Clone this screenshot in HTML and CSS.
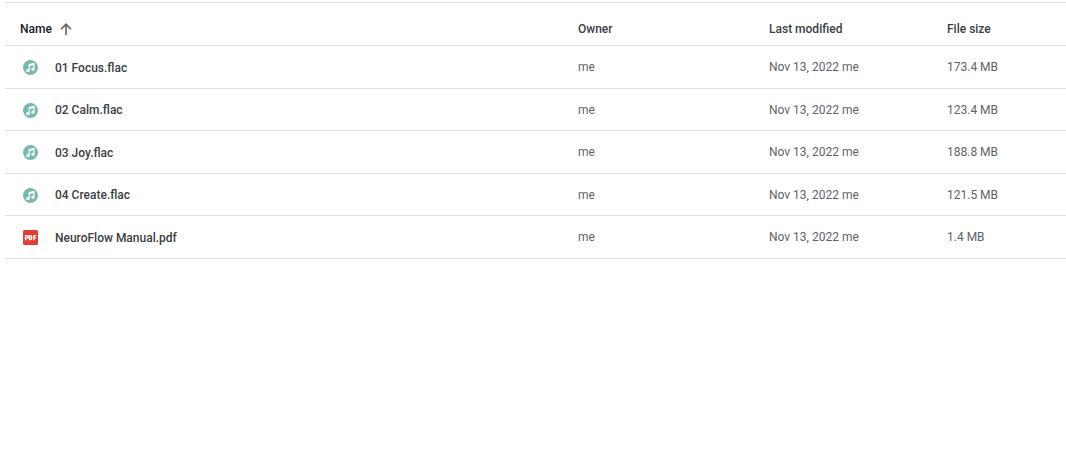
FILE: index.html
```
<!DOCTYPE html>
<html lang="en">
<head>
  <meta charset="UTF-8">
  <meta name="viewport" content="width=device-width, initial-scale=1.0">
  <title>Files</title>
  <link rel="stylesheet" href="styles.css">
</head>
<body>

  <!-- shared icons -->
  <svg class="icon-defs" aria-hidden="true">
    <symbol id="icon-audio" viewBox="0 0 16 16">
      <circle cx="8" cy="8" r="8" fill="#74bbad"/>
      <path d="M6 4.2 L12.4 3 V9.8 A1.8 1.6 0 1 1 11.2 8.4 V5.6 L7.2 6.4 V11.2 A1.9 1.7 0 1 1 6 9.7 Z" fill="#fff"/>
    </symbol>
    <symbol id="icon-pdf" viewBox="0 0 16 16">
      <rect width="16" height="16" rx="1.6" fill="#e53c31"/>
      <path d="M2.7 10.8 V6 H4.2 A1.2 1.2 0 0 1 4.2 8.7 H2.7 M7 6 V10.1 H7.8 A1.4 1.4 0 0 0 9.2 8.7 V7.4 A1.4 1.4 0 0 0 7.8 6 Z M11.6 10.8 V6 H14.2 M11.6 8.4 H13.8" fill="none" stroke="#fff" stroke-width="1.5"/>
    </symbol>
  </svg>

  <main class="files">
    <table class="file-list">
      <thead>
        <tr>
          <th class="col-name" scope="col" aria-sort="ascending">
            <button class="sort" type="button">
              Name
              <svg class="sort-arrow" viewBox="0 0 12 12" aria-hidden="true">
                <path d="M6 12 V1.5 M1 6.2 L6 1.2 L11 6.2" fill="none" stroke="#5f6368" stroke-width="1.6"/>
              </svg>
            </button>
          </th>
          <th class="col-owner" scope="col">Owner</th>
          <th class="col-modified" scope="col">Last modified</th>
          <th class="col-size" scope="col">File size</th>
        </tr>
      </thead>
      <tbody>
        <tr>
          <td><div class="file"><svg class="file-icon" aria-hidden="true"><use href="#icon-audio"/></svg>01 Focus.flac</div></td>
          <td>me</td>
          <td>Nov 13, 2022 <span class="editor">me</span></td>
          <td>173.4 MB</td>
        </tr>
        <tr>
          <td><div class="file"><svg class="file-icon" aria-hidden="true"><use href="#icon-audio"/></svg>02 Calm.flac</div></td>
          <td>me</td>
          <td>Nov 13, 2022 <span class="editor">me</span></td>
          <td>123.4 MB</td>
        </tr>
        <tr>
          <td><div class="file"><svg class="file-icon" aria-hidden="true"><use href="#icon-audio"/></svg>03 Joy.flac</div></td>
          <td>me</td>
          <td>Nov 13, 2022 <span class="editor">me</span></td>
          <td>188.8 MB</td>
        </tr>
        <tr>
          <td><div class="file"><svg class="file-icon" aria-hidden="true"><use href="#icon-audio"/></svg>04 Create.flac</div></td>
          <td>me</td>
          <td>Nov 13, 2022 <span class="editor">me</span></td>
          <td>121.5 MB</td>
        </tr>
        <tr>
          <td><div class="file"><svg class="file-icon" aria-hidden="true"><use href="#icon-pdf"/></svg>NeuroFlow Manual.pdf</div></td>
          <td>me</td>
          <td>Nov 13, 2022 <span class="editor">me</span></td>
          <td>1.4 MB</td>
        </tr>
      </tbody>
    </table>
  </main>

</body>
</html>
```
FILE: styles.css
```
body {
  margin: 0;
  background-color: #fff;
  color: #5f6368;
  font-family: Roboto, Arial, sans-serif;
  font-size: 12px;
  line-height: 16px;
}

.icon-defs {
  position: absolute;
  width: 0;
  height: 0;
}

.files {
  padding: 2px 0 0 5px;
}

.file-list {
  width: 100%;
  table-layout: fixed;
  border-collapse: separate;
  border-spacing: 0;
  border-top: 1px solid #e0e0e0;
}

th,
td {
  height: 42px;
  padding: 0;
  border-bottom: 1px solid #e0e0e0;
  text-align: left;
  vertical-align: middle;
}

tbody tr:nth-child(even) td {
  height: 41px;
}

th {
  height: 32px;
  padding-top: 10px;
  color: #3c4043;
  font-weight: 500;
}

.col-owner {
  width: 191px;
}

.col-modified {
  width: 178px;
}

.col-size {
  width: 119px;
}

.sort {
  display: flex;
  align-items: center;
  gap: 8px;
  padding: 0 0 0 15px;
  border: 0;
  background: none;
  color: #202124;
  font: inherit;
  cursor: pointer;
}

.sort-arrow {
  width: 12px;
  height: 12px;
}

.file {
  display: flex;
  align-items: center;
  gap: 17px;
  padding: 1px 0 0 18px;
  color: #3c4043;
  font-weight: 500;
}

.file-icon {
  width: 15px;
  height: 15px;
}
```
